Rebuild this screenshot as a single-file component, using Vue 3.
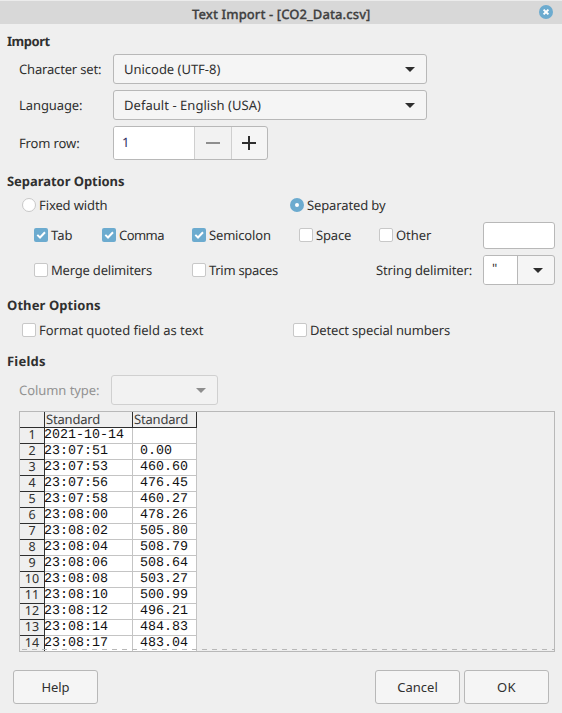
<script setup>
// Tracks a label so that it occupies the given width in pixels.
const vFit = {
  mounted(el, { value }) {
    const n = el.textContent.length
    const w = el.getBoundingClientRect().width
    el.style.letterSpacing = `${(value - w) / n}px`
  },
}

const selects = [
  { label: 'Character set:', lw: 82.3, value: 'Unicode (UTF-8)', vw: 96.3 },
  { label: 'Language:', lw: 63.5, value: 'Default - English (USA)', vw: 137 },
]
const separators = [
  { label: 'Tab', w: 21.5, on: true, cls: 'c1' },
  { label: 'Comma', w: 45, on: true, cls: 'c2' },
  { label: 'Semicolon', w: 61.8, on: true, cls: 'c3' },
  { label: 'Space', w: 35.3, on: false, cls: 'c4' },
  { label: 'Other', w: 35.2, on: false, cls: 'c5' },
]
const rows = [
  ['2021-10-14', ''],
  ['23:07:51', '0.00'],
  ['23:07:53', '460.60'],
  ['23:07:56', '476.45'],
  ['23:07:58', '460.27'],
  ['23:08:00', '478.26'],
  ['23:08:02', '505.80'],
  ['23:08:04', '508.79'],
  ['23:08:06', '508.64'],
  ['23:08:08', '503.27'],
  ['23:08:10', '500.99'],
  ['23:08:12', '496.21'],
  ['23:08:14', '484.83'],
  ['23:08:17', '483.04'],
]
</script>

<template>
  <main class="dialog">
    <header class="titlebar">
      <span class="title" v-fit="178.5">Text Import - [CO2_Data.csv]</span>
      <svg class="close" viewBox="0 0 14 14"><circle cx="7" cy="7" r="7" /><path d="M4.6 4.6l4.8 4.8M9.4 4.6L4.6 9.4" /></svg>
    </header>

    <h2 class="h-import"><span v-fit="42.8">Import</span></h2>
    <div v-for="s in selects" :key="s.label" class="row form">
      <div class="label"><span v-fit="s.lw">{{ s.label }}</span></div>
      <div class="select">
        <span v-fit="s.vw">{{ s.value }}</span>
        <svg class="arrow" viewBox="0 0 10 5"><path d="M0 0h10L5 5z" /></svg>
      </div>
    </div>
    <div class="row form spinrow">
      <div class="label"><span v-fit="60.5">From row:</span></div>
      <div class="spin">
        <div class="num">1</div>
        <div class="step minus"><svg viewBox="0 0 14 14"><path d="M0 7h14" /></svg></div>
        <div class="step plus"><svg viewBox="0 0 14 14"><path d="M0 7h14M7 0v14" /></svg></div>
      </div>
    </div>

    <h2 class="h-sep"><span v-fit="117.5">Separator Options</span></h2>
    <div class="row radios">
      <label class="opt r1"><i class="radio"></i><span v-fit="68.5">Fixed width</span></label>
      <label class="opt"><i class="radio on"></i><span v-fit="78.5">Separated by</span></label>
    </div>
    <div class="row seps">
      <label v-for="s in separators" :key="s.label" class="opt" :class="s.cls">
        <i class="check" :class="{ on: s.on }"><svg v-if="s.on" viewBox="0 0 14 14"><path d="M3.3 6.9L6 9.5l5-5.2" /></svg></i>
        <span v-fit="s.w">{{ s.label }}</span>
      </label>
      <div class="entry"></div>
    </div>
    <div class="row merge">
      <label class="opt m1"><i class="check"></i><span v-fit="101">Merge delimiters</span></label>
      <label class="opt m2"><i class="check"></i><span v-fit="69">Trim spaces</span></label>
      <div class="m3"><span v-fit="96">String delimiter:</span></div>
      <div class="combo">
        <div class="combo-text">"</div>
        <div class="combo-btn"><svg class="arrow" viewBox="0 0 10 5"><path d="M0 0h10L5 5z" /></svg></div>
      </div>
    </div>

    <h2 class="h-other"><span v-fit="93.7">Other Options</span></h2>
    <div class="row others">
      <label class="opt o1"><i class="check"></i><span v-fit="164.3">Format quoted field as text</span></label>
      <label class="opt"><i class="check"></i><span v-fit="140">Detect special numbers</span></label>
    </div>

    <h2 class="h-fields"><span v-fit="38.7">Fields</span></h2>
    <div class="row coltype">
      <div class="label"><span v-fit="80.5">Column type:</span></div>
      <div class="select disabled"><svg class="arrow" viewBox="0 0 10 5"><path d="M0 0h10L5 5z" /></svg></div>
    </div>

    <section class="preview">
      <div class="line head">
        <div class="idx"></div>
        <div class="a"><span v-fit="54">Standard</span></div>
        <div class="b"><span v-fit="54">Standard</span></div>
      </div>
      <div v-for="(r, i) in rows" :key="i" class="line">
        <div class="idx">{{ i + 1 }}</div>
        <div class="a">{{ r[0] }}</div>
        <div class="b">{{ r[1] }}</div>
      </div>
      <div class="dashes"></div>
    </section>

    <footer class="actions">
      <button class="help"><span v-fit="28">Help</span></button>
      <button><span v-fit="40.5">Cancel</span></button>
      <button><span v-fit="19">OK</span></button>
    </footer>
  </main>
</template>

<style>
body { background: #efefef; }
</style>

<style scoped>
* { box-sizing: border-box; }
.dialog {
  width: 562px; height: 713px; overflow: hidden; background: #efefef; color: #303030;
  font: 13px/18px "Noto Sans", "Open Sans", sans-serif; text-rendering: geometricPrecision;
}
span { white-space: nowrap; }
.titlebar {
  height: 24px; border-top: 1px solid #ececec; background: #d8d8d8; color: #404040;
  display: flex; align-items: center; padding: 0 9px 0 192px; justify-content: space-between;
}
.title { font-weight: 500; padding-top: 2px; -webkit-text-stroke: 0.3px #404040; }
.close { width: 14px; height: 14px; margin-top: -1px; }
.close circle { fill: #6cabcf; }
.close path { stroke: #fff; stroke-width: 2; fill: none; }
h2 { margin: 0; padding-left: 7px; font-size: 13px; line-height: 18px; height: 18px; font-weight: 700; }
.h-import { margin-top: 8px; }
.row { display: flex; align-items: center; height: 30px; }
.form { padding-left: 19px; margin-bottom: 6px; }
.h-import + .form { margin-top: 4px; }
.form .label { width: 94px; }
.select {
  width: 314px; height: 30px; border: 1px solid #b8b8b8; border-radius: 3px; background: #f5f5f5;
  display: flex; align-items: center; justify-content: space-between; padding: 0 11px 0 10px;
}
.arrow { width: 10px; height: 5px; fill: #2e2e2e; flex: none; }
.spinrow { height: 34px; margin-bottom: 0; }
.spin { display: flex; width: 155px; height: 34px; border: 1px solid #b8b8b8; border-radius: 3px; background: #f5f5f5; overflow: hidden; }
.num { width: 80px; background: #fff; padding: 6px 0 0 8px; color: #303060; line-height: 18px; }
.step { width: 37px; border-left: 1px solid #cfcfcf; display: flex; align-items: center; justify-content: center; }
.step.minus { background: #f2f2f2; }
.step.plus { width: 36px; padding-right: 2px; }
.step svg { width: 14px; height: 14px; fill: none; stroke: #2e2e2e; stroke-width: 2; }
.step.minus svg { stroke: #8e8e8e; }
.h-sep { margin-top: 12px; }
.opt { display: flex; align-items: center; gap: 3px; }
.radio, .check { width: 14px; height: 14px; border: 1px solid #c8c8c8; background: #fff; flex: none; display: block; }
.radio { border-radius: 50%; }
.check { border-radius: 2px; }
.radio.on { border: 5px solid #6cabcf; }
.check.on { border: 0; background: #6cabcf; }
.check svg { display: block; width: 14px; height: 14px; fill: none; stroke: #fff; stroke-width: 2; }
.radios { padding-left: 22px; }
.r1 { width: 268px; }
.seps { padding-left: 34px; }
.c1 { width: 68px; }
.c2 { width: 90px; }
.c3 { width: 107px; }
.c4 { width: 80px; }
.c5 { width: 104px; }
.entry { width: 72px; height: 27px; border: 1px solid #b8b8b8; border-radius: 3px; background: #fff; }
.merge { margin-top: 5px; padding-left: 34px; }
.m1 { width: 158px; }
.m2 { width: 184px; }
.m3 { width: 107px; }
.combo { display: flex; width: 72px; height: 30px; border: 1px solid #b8b8b8; border-radius: 3px; background: #f5f5f5; overflow: hidden; }
.combo-text { width: 34px; padding: 3px 0 0 8px; background: #fff; border-right: 1px solid #b8b8b8; }
.combo-btn { flex: 1; display: flex; align-items: center; justify-content: center; padding-left: 4px; }
.h-other { margin-top: 11px; }
.others { margin-top: 1px; padding-left: 22px; }
.o1 { width: 271px; }
.h-fields { margin-top: 7px; }
.coltype { margin-top: 5px; padding-left: 19px; color: #929292; }
.coltype .label { width: 92px; }
.select.disabled { width: 107px; background: #f2f2f2; border-color: #d0d0d0; justify-content: flex-end; }
.disabled .arrow { fill: #8e8e8e; }
.preview { position: relative; width: 536px; height: 241px; margin: 6px 0 0 19px; border: 1px solid #b8b8b8; overflow: hidden; }
.line { display: flex; height: 16px; font: 13.333px/16px "Liberation Mono", monospace; color: #111; }
.line > div { height: 16px; border-bottom: 1px solid #c4c4c4; border-right: 1px solid #c4c4c4; white-space: nowrap; }
.line > .idx {
  width: 25px; border-color: #2e2e2e; color: #303030; text-align: center;
  font: 12.5px/14px "Noto Sans", sans-serif;
}
.a { width: 88px; background: #fff; text-indent: -1px; }
.b { width: 64px; background: #fff; padding-left: 7px; }
.line.head > div { background: #efefef; border-color: #2e2e2e; padding-left: 1px; text-indent: 0; font: 13px/15px "Noto Sans", sans-serif; color: #404040; }
.dashes {
  position: absolute; left: 2px; right: 0; top: 237px; height: 1px;
  background: repeating-linear-gradient(90deg, #b8b8b8 0 5px, transparent 5px 10px);
}
.actions { display: flex; margin-top: 18px; padding-left: 13px; gap: 4px; }
button {
  width: 85px; height: 34px; padding: 0; border: 1px solid #b8b8b8; border-radius: 3px;
  background: #f5f5f5; color: #303030; font: inherit;
}
.help { margin-right: 273px; }
</style>
